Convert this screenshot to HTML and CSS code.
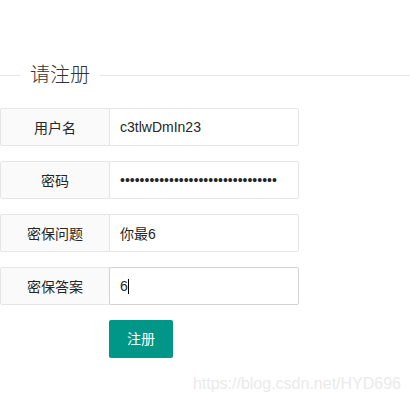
FILE: index.html
```html
<!DOCTYPE html>
<html lang="zh-CN">
<head>
<meta charset="utf-8">
<title>请注册</title>
<link rel="stylesheet" href="styles.css">
</head>
<body>
<div class="page">
  <div class="field-title">
    <span class="line line-left"></span>
    <span class="legend">请注册</span>
    <span class="line line-right"></span>
  </div>
  <form class="form">
    <div class="form-item">
      <label class="form-label">用户名</label>
      <input class="form-input" type="text" value="c3tlwDmIn23">
    </div>
    <div class="form-item">
      <label class="form-label">密码</label>
      <input class="form-input" type="password" value="abcdefghijklmnopqrstuvwxyz123456">
    </div>
    <div class="form-item">
      <label class="form-label">密保问题</label>
      <input class="form-input" type="text" value="你最6">
    </div>
    <div class="form-item">
      <label class="form-label">密保答案</label>
      <div class="input-wrap">
        <input class="form-input focused" type="text" value="6">
        <span class="caret"></span>
      </div>
    </div>
    <div class="form-actions">
      <button class="btn" type="button">注册</button>
    </div>
  </form>
  <div class="watermark">https://blog.csdn.net/HYD696</div>
</div>
</body>
</html>
```
FILE: styles.css
```css
html, body {
  margin: 0;
  padding: 0;
  background: #fff;
}
body {
  font-family: "Liberation Sans", "Noto Sans CJK SC", sans-serif;
  font-size: 14px;
  color: #262626;
}
.page {
  position: relative;
  width: 410px;
  height: 403px;
  padding-top: 60px;
  box-sizing: border-box;
}
.field-title {
  display: flex;
  align-items: center;
  height: 30px;
}
.line {
  height: 1px;
  background: #e6e6e6;
}
.line-left {
  width: 20px;
}
.line-right {
  flex: 1;
}
.legend {
  padding: 0 10px;
  font-size: 20px;
  font-weight: 300;
  color: #333;
  line-height: 30px;
}
.form {
  margin-top: 18px;
}
.form-item {
  display: flex;
  height: 38px;
  margin-bottom: 15px;
}
.form-label {
  width: 110px;
  height: 38px;
  box-sizing: border-box;
  border: 1px solid #e6e6e6;
  border-radius: 2px 0 0 2px;
  background: #fafafa;
  display: flex;
  align-items: center;
  justify-content: center;
  color: #262626;
  font-size: 14px;
}
.form-input {
  width: 190px;
  height: 38px;
  box-sizing: border-box;
  margin: 0 0 0 -1px;
  border: 1px solid #e6e6e6;
  border-radius: 2px;
  padding: 0 10px;
  font-family: "Liberation Sans", "Noto Sans CJK SC", sans-serif;
  font-size: 14px;
  color: #262626;
  background: #fff;
  outline: none;
}
.input-wrap {
  position: relative;
  display: flex;
}
.form-input.focused {
  border-color: #d2d2d2;
}
.caret {
  position: absolute;
  left: 18px;
  top: 12px;
  width: 1px;
  height: 15px;
  background: #000;
}
.form-actions {
  display: flex;
  padding-left: 109px;
}
.btn {
  height: 38px;
  padding: 0 18px;
  border: none;
  border-radius: 2px;
  background: #009688;
  color: #fff;
  font-family: "Liberation Sans", "Noto Sans CJK SC", sans-serif;
  font-size: 14px;
  line-height: 38px;
}
.watermark {
  position: absolute;
  right: 9px;
  top: 375px;
  font-size: 16px;
  color: #eaeaea;
  white-space: nowrap;
}
```
